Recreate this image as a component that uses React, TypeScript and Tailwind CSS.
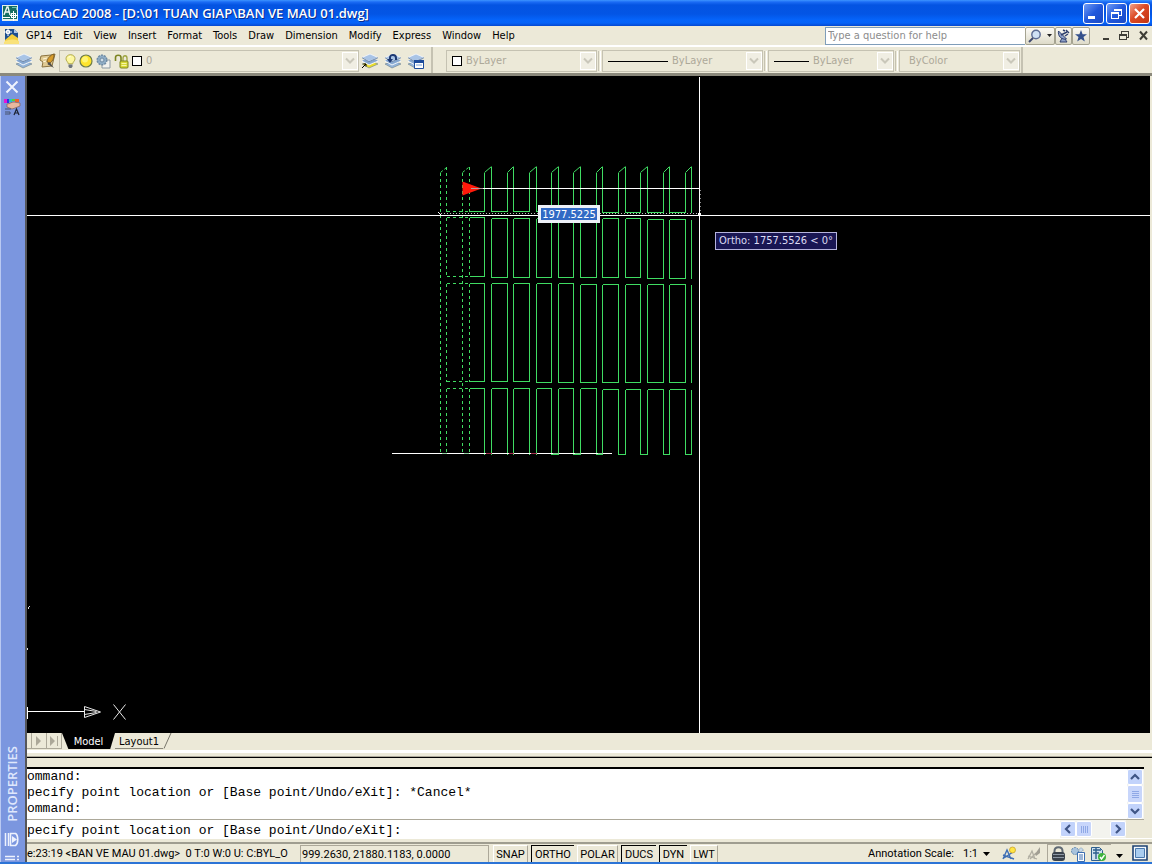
import React from "react";

const TAHOMA = "font-['DejaVu_Sans_Condensed','DejaVu_Sans',sans-serif]";
const STATUS = "font-['Roboto','Liberation_Sans',sans-serif]";
const MONO = "font-['Liberation_Mono','Courier_New',monospace]";

const menus = ["GP14", "Edit", "View", "Insert", "Format", "Tools", "Draw", "Dimension", "Modify", "Express", "Window", "Help"];

/* ---------- icons ---------- */

function AppIcon() {
  return (
    <svg width="16" height="16" viewBox="0 0 16 16" shapeRendering="crispEdges" aria-hidden="true">
      <rect width="16" height="16" fill="#e6efec" />
      <rect x="1" y="1" width="14" height="13" fill="#176e62" />
      <path d="M2 10 5 2h1l2 8M3 7h4" stroke="#eef6f4" strokeWidth="1.4" fill="none" shapeRendering="auto" />
      <path d="M8 10.5h8M11.5 6v10M0 12.5h8M9.5 8.5h4v4h-4z" stroke="#fff" fill="none" />
      <path d="M10 2h4v3" stroke="#6fc0b4" fill="none" />
    </svg>
  );
}

function DocIcon() {
  return (
    <svg width="16" height="16" viewBox="0 0 16 16" aria-hidden="true">
      <path d="M1 1h9l4 4v10H1z" fill="#1d4f8f" />
      <path d="M10 1l4 4h-4z" fill="#a9c5e8" />
      <path d="M1 12l7-6 6 4v5H1z" fill="#f3cf3c" />
      <path d="M0 14c5-3 10-3 15-1v3H0z" fill="#f9e27a" />
      <path d="M4 0v8M0 4h8M2.500 2.500h3v3h-3z" stroke="#fff" fill="none" />
    </svg>
  );
}

function Layers({ front = "#93b3d8", children }: { front?: string; children?: React.ReactNode }) {
  return (
    <svg width="18" height="16" viewBox="0 0 18 16" aria-hidden="true">
      <path d="M1 11l7 4 9-4-7-3z" fill={front} stroke="#6c7f8c" strokeWidth=".6" />
      <path d="M1 8l7 4 9-4-7-3z" fill="#b9cfe9" stroke="#fff" strokeWidth=".8" />
      <path d="M1 7.500l7 3.800 9-3.800-7-3z" fill="#86a7d0" />
      <path d="M1 4.500l7 4 9-4-8-3.500z" fill="#a9c4e6" stroke="#f5f8fc" strokeWidth=".8" />
      <path d="M1 4.700l7 4 9-4" stroke="#557399" strokeWidth=".8" fill="none" />
      {children}
    </svg>
  );
}

function LayerStates() {
  return (
    <svg width="18" height="16" viewBox="0 0 18 16" aria-hidden="true">
      <path d="M2 3l10-1 4-1-3 12-10 1 1-5-3-2z" fill="#e0ca93" stroke="#8b7340" />
      <path d="M15 1c-4 1-7 5-7 8l3 1c3-2 4-5 4-9z" fill="#d89c2c" stroke="#6f5320" strokeWidth=".8" />
      <path d="M9 10c1-1 3 0 3 1l3 4-5-3c-1 0-2-1-1-2z" fill="#4d4d4d" />
      <path d="M4 6l4-1M4 9l3-1" stroke="#fff7d9" />
    </svg>
  );
}

function Bulb() {
  return (
    <svg width="11" height="15" viewBox="0 0 11 15" aria-hidden="true">
      <path d="M5.500.7C2.800.7 1 2.500 1 4.800c0 2 2 3 2.300 5h4.400c.3-2 2.300-3 2.300-5C10 2.500 8.200.7 5.500.7z" fill="#fdf7a0" stroke="#a9a23c" strokeWidth=".9" />
      <path d="M3.500 10.500h4v2l-1 1.500h-2l-1-1.500z" fill="#6d747c" />
      <path d="M4 3.500c0-1 1-1 1.500-1" stroke="#fff" fill="none" />
    </svg>
  );
}

function Sun() {
  return (
    <svg width="14" height="14" viewBox="0 0 14 14" aria-hidden="true">
      <circle cx="7" cy="7" r="6" fill="#ffe42c" stroke="#6d7c49" strokeWidth="1.200" />
      <circle cx="6" cy="5.500" r="3" fill="#fff573" />
    </svg>
  );
}

function ViewportFreeze() {
  return (
    <svg width="15" height="15" viewBox="0 0 15 15" aria-hidden="true">
      <path d="M8 6h6v8H6v-4" fill="#f2f2ee" stroke="#8d9aa3" />
      <circle cx="6" cy="6" r="4.800" fill="#8fadc6" stroke="#6f8ba3" strokeWidth="1.500" strokeDasharray="2 1" />
      <circle cx="6" cy="6" r="2" fill="#cfdde8" stroke="#6f8ba3" />
    </svg>
  );
}

function Unlock() {
  return (
    <svg width="15" height="15" viewBox="0 0 15 15" aria-hidden="true">
      <path d="M1.500 7V3.500c0-3 5.500-3 5.500 0V9" stroke="#7c8420" strokeWidth="1.600" fill="none" />
      <path d="M9 7V4c0-3 4-3 4 0v4" stroke="#9da43f" strokeWidth="1.300" fill="none" />
      <rect x="6" y="7" width="8" height="7" rx="1" fill="#d8d936" stroke="#7c8420" />
      <path d="M7.500 9.500h5M7.500 11.500h5" stroke="#f7f7a8" />
    </svg>
  );
}

function Swatch() {
  return <span className="size-[10px] shrink-0 border border-black bg-white" />;
}

function Caret({ className = "" }: { className?: string }) {
  return (
    <svg className={className} width="10" height="8" viewBox="0 0 10 8" aria-hidden="true">
      <path d="M1 1.500l4 4 4-4" stroke="currentColor" strokeWidth="2" fill="none" />
    </svg>
  );
}

/* ---------- toolbar ---------- */

function Combo({ label, value, width, children }: { label: string; value: string; width: string; children?: React.ReactNode }) {
  return (
    <div className={`flex h-[22px] shrink-0 items-center border border-[#c5c2b2] pl-[5px] ${width}`}>
      {children}
      <select aria-label={label} disabled className="ml-[4px] h-[18px] min-w-0 flex-1 appearance-none bg-transparent text-[#aca899] opacity-100">
        <option>{value}</option>
      </select>
      <span className="flex h-[18px] w-[16px] items-center justify-center border border-white bg-[#f0eee3] text-[#c9c7ba]">
        <Caret />
      </span>
    </div>
  );
}

function Grip() {
  return <span className="h-[20px] w-[3px] shrink-0 border-x border-l-[#c5c2b2] border-r-white" />;
}

function TitleBar() {
  const btn = "flex size-[21px] items-center justify-center rounded-[3px] border border-white text-white";
  return (
    <header className="flex h-[26px] shrink-0 items-center bg-[linear-gradient(180deg,#3d95ff_0,#1b6cf5_2px,#0454e2_5px,#0355e5_14px,#0564fb_20px,#0663f8_23px,#0548d0_26px)] pl-[2px] pr-[2px]">
      <AppIcon />
      <h1 className="ml-[4px] flex-1 truncate font-['Open_Sans',sans-serif] text-[13px] font-semibold leading-[20px] text-white [text-shadow:1px_1px_0_#0a2c8c]">
        AutoCAD 2008 - [D:\01 TUAN GIAP\BAN VE MAU 01.dwg]
      </h1>
      <div className="flex gap-[2px]">
        <button aria-label="Minimize" className={`${btn} bg-[linear-gradient(135deg,#6f9cf6,#2158dc_50%,#1a49c4)]`}>
          <svg width="13" height="13"><path d="M1 9h7v3H1z" fill="#fff" /></svg>
        </button>
        <button aria-label="Restore" className={`${btn} bg-[linear-gradient(135deg,#6f9cf6,#2158dc_50%,#1a49c4)]`}>
          <svg width="13" height="13" shapeRendering="crispEdges"><path d="M4.500 4V2.500h7v6H9M4 3.500h8M1.500 5.500h7v6h-7zM1 6.500h8" stroke="#fff" fill="none" /></svg>
        </button>
        <button aria-label="Close" className={`${btn} bg-[linear-gradient(135deg,#f0a18a,#dc4a25_45%,#c23413)]`}>
          <svg width="13" height="13"><path d="M2 2l9 9M11 2l-9 9" stroke="#fff" strokeWidth="2.200" /></svg>
        </button>
      </div>
    </header>
  );
}

function MenuBar() {
  const tool = "flex h-[18px] items-center justify-center rounded-[2px] border border-[#a5a391] bg-[linear-gradient(180deg,#fbfaf6,#dedbc9)]";
  return (
    <nav className="flex h-[19px] shrink-0 items-center bg-[#ece9d8] pl-[4px]">
      <DocIcon />
      <ul className="ml-[6px] flex flex-1 gap-[11px] leading-[18px]">
        {menus.map((m) => (
          <li key={m}><button className="block">{m}</button></li>
        ))}
      </ul>
      <input aria-label="Type a question for help" placeholder="Type a question for help" className="h-[18px] w-[200px] border border-r-0 border-[#7f9db9] bg-white px-[2px] text-[11px] placeholder:text-[#8c8c8c]" />
      <button aria-label="Search" className={`${tool} w-[30px] gap-[5px]`}>
        <svg width="14" height="14"><circle cx="8" cy="5.500" r="4.200" fill="#cfe0f5" stroke="#5c6b93" strokeWidth="1.400" /><path d="M5 9l-4 4" stroke="#404a70" strokeWidth="2" /></svg>
        <svg width="5" height="3"><path d="M0 0h5L2.500 3z" fill="#222" /></svg>
      </button>
      <button aria-label="Communication Center" className={`${tool} w-[17px]`}>
        <svg width="13" height="14"><path d="M1.500 2c-1 5 3 9 8 8zM5 9l-2 4h7l-2-3" fill="#8fa1c9" stroke="#2f3f6e" /><path d="M4 6l6-3M8 7l3-2M9 1l3 3M6 1l2 1" stroke="#2f3f6e" strokeWidth="1.400" /></svg>
      </button>
      <button aria-label="Favorites" className={`${tool} w-[18px]`}>
        <svg width="12" height="12" viewBox="0 0 12 12"><path d="M6 0l1.600 4.200H12L8.500 7l1.300 4.600L6 8.900l-3.800 2.700L3.500 7 0 4.200h4.400z" fill="#34508c" /></svg>
      </button>
      <div className="ml-[10px] flex w-[52px] items-center justify-between pl-[2px] pr-[4px] text-[#3e3d36]">
        <button aria-label="Minimize drawing"><svg width="8" height="11" className="block"><path d="M1 8h6v2H1z" fill="currentColor" /></svg></button>
        <button aria-label="Restore drawing"><svg width="11" height="11" className="block" shapeRendering="crispEdges"><path d="M2.500 4V1h7v6H8M.5 4.500h7v5h-7zM0 5.500h8" stroke="currentColor" fill="none" /></svg></button>
        <button aria-label="Close drawing"><svg width="9" height="11" className="block"><path d="M1 1.500l7 8M8 1.500l-7 8" stroke="currentColor" strokeWidth="2" /></svg></button>
      </div>
    </nav>
  );
}

function Toolbar() {
  return (
    <div className="flex h-[31px] shrink-0 border-b-[3px] border-t-2 border-b-[#8b897c] border-t-white bg-[#ece9d8]">
      <div className="flex items-center gap-[6px] border-r-2 border-[#c5c2b2] pl-[15px] pr-[6px] pt-[2px]">
        <button aria-label="Layer Properties Manager"><Layers /></button>
        <button aria-label="Layer States Manager"><LayerStates /></button>
        <Combo label="Layer" value="0" width="w-[300px] -ml-[4px]">
          <span className="flex items-center gap-[3px]"><Bulb /><Sun /><ViewportFreeze /><Unlock /><Swatch /></span>
        </Combo>
        <div className="-ml-[4px] flex gap-[5px]">
          <button aria-label="Make Object's Layer Current">
            <Layers front="#e8dc2c"><path d="M1 15l4-4M2.500 11H5v2.500" stroke="#000" fill="none" /></Layers>
          </button>
          <button aria-label="Layer Previous">
            <Layers><path d="M6 8V4.500C6 1 12 1 12 5v2" stroke="#1f3a73" strokeWidth="2" fill="none" /><path d="M3 6h6L6 10z" fill="#1f3a73" /></Layers>
          </button>
          <button aria-label="Layer Walk">
            <Layers><path d="M7.500 7.500h9v8h-9z" fill="#fff" stroke="#1d4c9c" /><path d="M7 7h10v3H7z" fill="#1d4c9c" /><path d="M9 12h6" stroke="#7ba0d8" /></Layers>
          </button>
        </div>
      </div>
      <div className="flex items-center gap-px border-r-2 border-[#c5c2b2] pl-[13px] pr-px pt-[2px]">
        <Combo label="Color" value="ByLayer" width="w-[151px]"><Swatch /></Combo>
        <Grip />
        <Combo label="Linetype" value="ByLayer" width="w-[161px]"><span className="h-px w-[60px] bg-black" /></Combo>
        <Grip />
        <Combo label="Lineweight" value="ByLayer" width="w-[126px]"><span className="h-px w-[35px] bg-black" /></Combo>
        <Grip />
        <Combo label="Plot Style" value="ByColor" width="w-[121px]" />
      </div>
    </div>
  );
}

/* ---------- drawing ---------- */

const bars = [
  [484, 491], [507, 513], [529, 536], [551, 558], [573, 580],
  [596, 602], [618, 625], [640, 647], [663, 669], [685, 691],
];

function gridPath() {
  let d = "";
  const edges = [469, ...bars.flat()];
  for (let i = 0; i < 10; i++) {
    const l = edges[i * 2];
    const r = edges[i * 2 + 1];
    const y1 = i < 5 ? 211 : 212;
    const y2 = i < 1 ? 217 : i < 8 ? 218 : 219;
    const y3 = i < 1 ? 276 : i < 8 ? 277 : 278;
    const y4 = i < 5 ? 283 : 284;
    const y5 = i < 3 ? 381 : 382;
    const y6 = i < 6 ? 388 : 389;
    d += `M${l} ${y1}H${r}V172M${l} ${y2}H${r}V${y3}H${l}M${l} ${y4}H${r}V${y5}H${l}M${l} ${y6}H${r}V454`;
    if (i > 0) d += `M${l} ${y1}V166M${l} ${y2}V${y3}M${l} ${y4}V${y5}M${l} ${y6}V454`;
    if (i > 2) d += `M${r} 454H${edges[i * 2 + 2]}`;
  }
  return d + "M691 166V212M691 219V278M691 284V382M691 389V454";
}

function DrawingArea() {
  return (
    <div className="relative mr-[2px] min-h-[400px] flex-1 overflow-hidden bg-black">
      <svg className="absolute inset-0 size-full" role="img" aria-label="Model space drawing">
        <g transform="translate(-26.5 -75.500)" fill="none" shapeRendering="crispEdges">
          <path d={gridPath()} stroke="#3fdc62" />
          <path d={bars.map(([l, r]) => `M${l} 172L${r} 166`).join("")} stroke="#3fdc62" shapeRendering="auto" />
          <path d="M440 172V454M446 166V211M446 217V276M446 283V381M446 388V454M462 172V454M469 166V211M469 217V276M469 283V381M469 388V454" stroke="#3fdc62" strokeDasharray="3 3" />
          <path d="M446 211H469M446 217H469M446 276H469M446 283H469M446 381H469M446 388H469" stroke="#3fdc62" strokeDasharray="3 3" />
          <path d="M440 172l6-5M462 172l6-5" stroke="#3fdc62" strokeDasharray="3 2" shapeRendering="auto" />
          <path d="M440 213H699" stroke="#bdbdbd" strokeDasharray="1 2" />
          <path d="M438 212l2 2M440 215v-2" stroke="#fff" />
          <path d="M26 215H5000M699 76V3000M469 188H699M391 453H611" stroke="#fff" />
          <path d="M700 189V215" stroke="#888" strokeDasharray="1 3" />
          <path d="M697 215l2-3 2 3" stroke="#fff" />
          <path d="M485 453h6M508 453h5M530 453h6" stroke="#a0304c" />
          <path d="M441 453h5M463 453h5M552 453h6M574 453h6M597 453h5" stroke="#8fce9e" />
          <path d="M462 181l19 7-19 7z" fill="#ff1a0a" shapeRendering="auto" />
          <path d="M470 188h12" stroke="#b0a0a0" />
          <path d="M26 711H84M27 706v12" stroke="#fff" />
          <path d="M84 706l16 5.500-16 5.500zM84 709l12 2M84 714l12-2" stroke="#e8e8e8" shapeRendering="auto" />
          <path d="M113 704l12 15M125 704l-12 15" stroke="#e8e8e8" shapeRendering="auto" />
          <path d="M27 609l2-3M27 647v2" stroke="#ddd" />
        </g>
      </svg>
      <input
        aria-label="Distance"
        defaultValue="1977.5225"
        className="absolute left-[511px] top-[129px] h-[18px] w-[62px] border-[3px] border-[#eef1f8] bg-[#316ac5] px-px text-center text-[11px] leading-[12px] text-white"
      />
      <div className="absolute left-[688px] top-[156px] flex h-[18px] w-[122px] items-center justify-center whitespace-nowrap border border-[#b5b3dc] bg-[#191653] text-[11px] text-[#dcdcf4]">
        Ortho: 1757.5526 &lt; 0°
      </div>
    </div>
  );
}

/* ---------- side palette ---------- */

function Palette() {
  return (
    <aside className="flex w-[27px] shrink-0 flex-col items-center border-l border-r-2 border-l-[#b9c9f2] border-r-[#55565a] bg-[#7b96df] pr-[2px] pt-[4px]">
      <button aria-label="Close palette">
        <svg width="14" height="14" className="block"><path d="M1.500 1.500l11 11M12.500 1.500l-11 11" stroke="#f1f4fd" strokeWidth="2" /></svg>
      </button>
      <svg width="18" height="18" viewBox="0 0 18 18" className="mt-[4px]" aria-hidden="true">
        <path d="M1 1h3v4H1z" fill="#e516d8" /><path d="M4 1h2v4H4z" fill="#2c33e8" /><path d="M6 1h3v3H6z" fill="#22c7c2" /><path d="M9 1h3v2H9z" fill="#5ed236" /><path d="M12 1h4v3h-4z" fill="#f0622b" />
        <path d="M4 6c3 0 4-2 7-2l6 1v3l-5 2-3 1-5-2z" fill="#e8b89e" stroke="#8b5f4d" strokeWidth=".7" />
        <path d="M2 11h6M2 14h5v2H2" stroke="#49536d" fill="none" />
        <path d="M11 17l2.500-6L16 17M12 15h3" stroke="#1d2333" strokeWidth="1.200" fill="none" />
      </svg>
      <span className="mt-auto rotate-180 font-['Open_Sans',sans-serif] text-[13px] font-semibold leading-[16px] text-[#dfe7fc] [writing-mode:vertical-rl]">PROPERTIES</span>
      <button aria-label="Auto-hide" className="mt-[10px]">
        <svg width="16" height="15" className="block"><path d="M1.500 1v13M4.500 1v13" stroke="#eef2fd" strokeWidth="1.500" /><path d="M6.500 1.500h5c3 2 3 10 0 12h-5z" fill="none" stroke="#eef2fd" strokeWidth="1.600" /><path d="M8 4l5 3.500L8 11z" fill="#eef2fd" /></svg>
      </button>
      <button aria-label="Palette options" className="mt-[8px]">
        <svg width="16" height="7" className="block"><path d="M1 1.500h10M1 4.500h10M13 1.500h2M13 4.500h2" stroke="#eef2fd" strokeWidth="1.500" /></svg>
      </button>
    </aside>
  );
}

/* ---------- tabs, command line, status ---------- */

function LayoutTabs() {
  return (
    <div className="flex h-[17px] shrink-0 bg-[#ece9d8] text-[11px]">
      {["", "M4 3l5 5-5 5z", "M3 3l5 5-5 5zM10 3h1v10h-1z"].map((d, i) => (
        <button key={i} aria-label={["Previous tab", "Next tab", "Last tab"][i]} className={`h-[16px] border-b border-r border-[#aca899] ${i === 0 ? "w-[5px]" : "w-[15px]"}`}>
          <svg width="13" height="15" className="block"><path d={d} fill="#aca899" /></svg>
        </button>
      ))}
      <button className="h-[16px] w-[53px] bg-black pt-px text-center leading-[16px] text-white [clip-path:polygon(0_0,100%_0,91%_100%,12%_100%)]">Model</button>
      <div className="flex h-[16px] items-center border-b border-[#8b897c]">
        <button className="w-[48px] pt-[2px] text-center leading-[16px]">Layout1</button>
      </div>
      <svg width="9" height="16" aria-hidden="true"><path d="M1 15.500L8 0" stroke="#77756a" fill="none" /></svg>
    </div>
  );
}

function ScrollBtn({ label, d }: { label: string; d: string }) {
  return (
    <button aria-label={label} className="flex size-[16px] items-center justify-center rounded-[2px] border border-white bg-[#c2d3fb]">
      <svg width="12" height="12"><path d={d} stroke="#3f5586" strokeWidth="2.200" fill="none" /></svg>
    </button>
  );
}

function CommandWindow() {
  return (
    <section className={`shrink-0 bg-[#ece9d8] ${MONO} text-[13px] text-black`}>
      <div className="h-[3px] bg-white" />
      <div className="h-[3px]" />
      <div className="h-[2px] border-t border-[#aca899] bg-black" />
      <div className="h-[9px]" />
      <div className="mr-[8px] flex h-[53px] border-b border-t-2 border-b-[#aca899] border-t-black bg-white">
        <div className="flex-1 whitespace-pre leading-[16px]">
          <p>ommand:</p>
          <p>pecify point location or [Base point/Undo/eXit]: *Cancel*</p>
          <p>ommand:</p>
        </div>
        <div className="flex w-[17px] flex-col bg-[#f3f3ee]">
          <ScrollBtn label="Scroll up" d="M2 8l4-4 4 4" />
          <span className="flex w-[16px] flex-1 flex-col items-center justify-center gap-px rounded-[2px] border border-white bg-[#c8d6fb]">
            {[0, 1, 2, 3].map((i) => <i key={i} className="h-px w-[7px] bg-[#8fa8e6]" />)}
          </span>
          <ScrollBtn label="Scroll down" d="M2 4l4 4 4-4" />
        </div>
      </div>
      <div className="mr-[26px] flex h-[18px] items-center bg-white">
        <input aria-label="Command" defaultValue="pecify point location or [Base point/Undo/eXit]:" className="h-[18px] min-w-0 flex-1 bg-transparent pt-[3px] outline-none" />
        <div className="flex h-[18px] w-[66px] items-center bg-[#f3f3ee]">
          <ScrollBtn label="Scroll left" d="M8 2L4 6l4 4" />
          <span className="flex h-[16px] w-[16px] items-center justify-center gap-px rounded-[2px] border border-white bg-[#c8d6fb]">
            {[0, 1, 2, 3].map((i) => <i key={i} className="h-[7px] w-px bg-[#8fa8e6]" />)}
          </span>
          <span className="ml-auto"><ScrollBtn label="Scroll right" d="M4 2l4 4-4 4" /></span>
        </div>
      </div>
      <div className="h-[6px] border-b-2 border-t border-b-[#9f9d90] border-t-white" />
    </section>
  );
}

const modes: [string, boolean, string][] = [
  ["SNAP", false, "w-[35px]"], ["ORTHO", true, "w-[43px]"], ["POLAR", false, "w-[41px]"],
  ["DUCS", true, "w-[35px]"], ["DYN", true, "w-[28px]"], ["LWT", false, "w-[28px]"],
];

function StatusBar() {
  return (
    <footer className={`flex h-[18px] shrink-0 items-center bg-[#ece9d8] ${STATUS} whitespace-nowrap text-[11px] text-black`}>
      <span className="w-[273px] shrink-0 whitespace-pre pt-[2px]">{"e:23:19 <BAN VE MAU 01.dwg>  0 T:0 W:0 U: C:BYL_O"}</span>
      <span className="h-[17px] w-[189px] shrink-0 border border-b-0 border-[#aca899] pl-px leading-[18px]">999.2630, 21880.1183, 0.0000</span>
      <div className="ml-[4px] flex gap-[3px]">
        {modes.map(([name, on, w]) => (
          <button key={name} aria-pressed={on} className={`h-[17px] border-l border-t pt-px text-center leading-[16px] ${w} ${on ? "border-black" : "border-r border-l-white border-t-white border-r-[#aca899]"}`}>
            {name}
          </button>
        ))}
      </div>
      <div className="ml-auto flex items-center">
        <span className="pt-[2px]">Annotation Scale:</span>
        <button className="ml-[9px] flex items-center gap-[5px] pt-[2px]">
          1:1
          <svg width="7" height="4"><path d="M0 0h7L3.500 4z" fill="#000" /></svg>
        </button>
        <button aria-label="Annotation visibility" className="ml-[12px]">
          <svg width="15" height="15" className="block"><path d="M1 13l4-9 4 9M1 9l11 4M2 12L11 6" stroke="#3e6fb4" strokeWidth="1.400" fill="none" /><circle cx="10.500" cy="4" r="3" fill="#ffe545" stroke="#c39a20" strokeWidth=".7" /></svg>
        </button>
        <button aria-label="Automatic scales" className="ml-[10px]">
          <svg width="15" height="15" className="block"><path d="M1 13l4-8 3 8M1 10l9 3M3 13l6-6" stroke="#b0aea2" strokeWidth="1.300" fill="none" /><path d="M8 8l5-7v6l-4 3z" fill="#a19f94" /></svg>
        </button>
        <div className="ml-[5px] flex h-[18px] w-[64px] items-center gap-[4px] border-l border-t border-[#aca899] pl-[3px]">
          <button aria-label="Lock toolbars">
            <svg width="15" height="16" className="block"><path d="M3.500 8V5c0-5 8-5 8 0v3" stroke="#606a74" strokeWidth="2" fill="none" /><rect x="1" y="6" width="13" height="9" rx="3" fill="#3b434c" /><path d="M2 8.500h11M2 11.500h11" stroke="#8d98a4" /></svg>
          </button>
          <button aria-label="Settings">
            <svg width="16" height="16" className="block"><circle cx="5" cy="5" r="3.500" fill="#a9c3dc" stroke="#5f86ac" strokeDasharray="2 1" /><circle cx="11" cy="4" r="2" fill="#c8d8e8" stroke="#7898b8" strokeDasharray="1 1" /><path d="M7.500 6.500h7v9h-7z" fill="#fff" stroke="#3c6eb0" /><path d="M9 9h4M9 11h4M9 13h4" stroke="#3c6eb0" /></svg>
          </button>
          <button aria-label="Standards">
            <svg width="17" height="16" className="block"><path d="M1.500 1.500h8l3 3v10h-11z" fill="#cfe0ee" stroke="#2e5f8e" /><path d="M3 4h8M6 2v11M3 7h6" stroke="#2e5f8e" strokeWidth="1.400" /><circle cx="12" cy="11" r="4" fill="#3fb23c" /><path d="M10 11l1.500 2 3-4" stroke="#fff" strokeWidth="1.400" fill="none" /></svg>
          </button>
        </div>
        <button aria-label="Status bar menu" className="ml-[5px] pt-[5px]"><svg width="7" height="4" className="block"><path d="M0 0h7L3.500 4z" fill="#000" /></svg></button>
        <button aria-label="Clean screen" className="ml-[9px] mr-[4px]">
          <svg width="16" height="16" className="block"><path d="M1 1h14v14H1z" fill="#f4f8fc" stroke="#1d4273" strokeWidth="1.600" /><path d="M3.500 3.500h9v9h-9z" fill="#a9cdf0" stroke="#4878ad" /></svg>
        </button>
      </div>
    </footer>
  );
}

export default function App() {
  return (
    <div className={`flex min-h-screen flex-col overflow-hidden bg-[#ece9d8] ${TAHOMA} text-[11px] text-black`}>
      <TitleBar />
      <MenuBar />
      <Toolbar />
      <main className="flex flex-1">
        <Palette />
        <div className="flex min-w-0 flex-1 flex-col">
          <DrawingArea />
          <LayoutTabs />
          <CommandWindow />
          <StatusBar />
        </div>
      </main>
      <div className="h-[2px] bg-[#2c74d6]" />
    </div>
  );
}
